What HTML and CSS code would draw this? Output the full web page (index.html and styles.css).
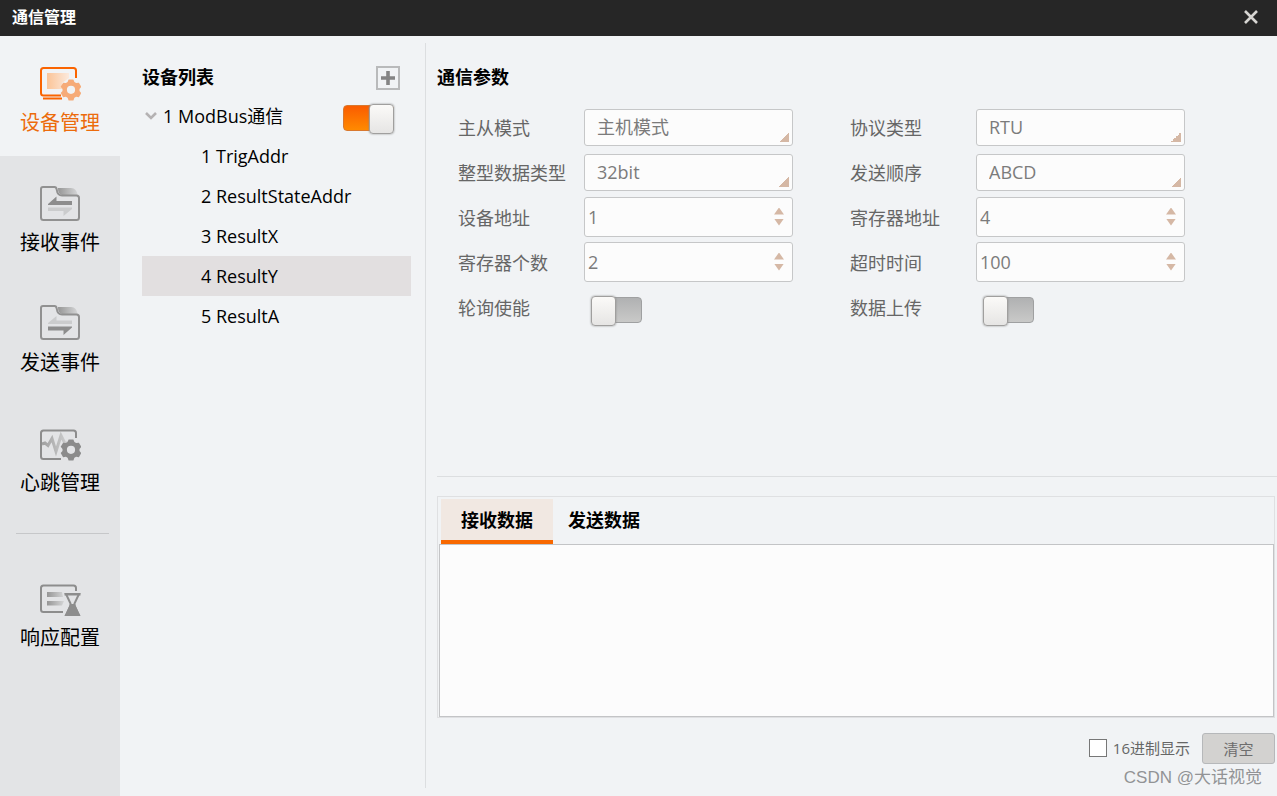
FILE: index.html
```html
<!DOCTYPE html>
<html lang="zh-CN">
<head>
<meta charset="utf-8">
<title>通信管理</title>
<link rel="stylesheet" href="styles.css">
</head>
<body>
<svg class="defs" width="0" height="0" aria-hidden="true">
  <defs>
    <linearGradient id="fadeOrange"><stop offset="0" stop-color="#fbc497"/><stop offset="1" stop-color="#fbe9dc"/></linearGradient>
    <linearGradient id="fadeGray"><stop offset="0" stop-color="#969696"/><stop offset="1" stop-color="#d4d5d6"/></linearGradient>
    <linearGradient id="pulse"><stop offset="0" stop-color="#a0a0a0"/><stop offset="1" stop-color="#d0d1d2"/></linearGradient>
    <path id="gear" d="M-2.4-10h4.8l1 2.6 1.7 1 2.8-.4 2.4 4.1-1.8 2.2v1.9l1.800 2.200-2.400 4.100-2.800-.4-1.700 1-1 2.600h-4.800l-1-2.600-1.700-1-2.800.4-2.400-4.100 1.800-2.200v-1.900l-1.800-2.200 2.400-4.100 2.800.4 1.700-1zM0-3.800a4.100 4.100 0 1 0 0 8.200 4.100 4.100 0 1 0 0-8.200z" fill-rule="evenodd"/>
    <g id="folder">
      <path d="M19 3h13c4 0 6 3 6.500 7H23c-3-1-4-3-4-7z" fill="url(#fadeGray)"/>
      <path d="M4 2h11.500c2 0 2 1 2.300 3 .5 4 2.200 5.500 5.200 5.500h14.500q2.500 0 2.500 2.500v19.500q0 2.500-2.500 2.500H4.500Q2 35 2 32.500V4q0-2 2-2z" fill="none" stroke="#919191" stroke-width="2"/>
    </g>
  </defs>
</svg>
<div class="window">
  <header class="titlebar">
    <h1 class="titlebar-text">通信管理</h1>
    <button class="close" type="button" aria-label="关闭"><svg width="16" height="16" viewBox="0 0 16 16"><path d="M2 2l12 12M14 2L2 14" stroke="#d6d5d2" stroke-width="2.600" fill="none"/></svg></button>
  </header>
  <div class="body">
    <nav class="sidebar">
      <a class="nav-item active" href="#device">
        <svg width="42" height="40" viewBox="0 0 42 40"><path d="M22 31.500H4.500Q2 31.500 2 29V6.500Q2 4 4.500 4h30Q37 4 37 6.500V14" fill="none" stroke="#fa6400" stroke-width="2"/><path d="M4 34.500h19" stroke="#fa6400" stroke-width="2"/><path d="M8 9h22v5l-7 5v6H8z" fill="url(#fadeOrange)"/><use href="#gear" x="32" y="25.500" fill="#f6ab78"/></svg>
        <span>设备管理</span>
      </a>
      <a class="nav-item" href="#receive">
        <svg width="42" height="40" viewBox="0 0 42 40"><use href="#folder" y="1"/><path d="M9 21v-1l8.500-7.500v4.500H33v4z" fill="#8d8d8d"/><path d="M33 23.500v1.500l-8.500 7v-5H9v-3.500z" fill="#cbcccd"/></svg>
        <span>接收事件</span>
      </a>
      <a class="nav-item" href="#send">
        <svg width="42" height="40" viewBox="0 0 42 40"><use href="#folder"/><path d="M9 20v-1l8.500-7v4.500H33V20z" fill="#cbcccd"/><path d="M33 22.500v1L24.500 31v-4.500H9v-4z" fill="#8d8d8d"/></svg>
        <span>发送事件</span>
      </a>
      <a class="nav-item" href="#heartbeat">
        <svg width="42" height="40" viewBox="0 0 42 40"><path d="M3 20l3-1 3 2.500 4-7 4 13 5-16 4 8 4-1" fill="none" stroke="url(#pulse)" stroke-width="3"/><path d="M22 35H4.500Q2 35 2 32.500V9q0-2.500 2.500-2.500h30Q37 6.500 37 9v5" fill="none" stroke="#8d8d8d" stroke-width="2"/><use href="#gear" x="32" y="25.500" fill="#8b8b8b"/></svg>
        <span>心跳管理</span>
      </a>
      <hr class="nav-divider">
      <a class="nav-item" href="#response">
        <svg width="42" height="40" viewBox="0 0 42 40"><path d="M24 33H4.500Q2 33 2 30.500V9q0-2.500 2.500-2.500h30Q37 6.500 37 9v3" fill="none" stroke="#8d8d8d" stroke-width="2"/><path d="M8 13h15l1 5H8zm0 9h17l-2 4.500H8z" fill="url(#fadeGray)"/><path d="M27 15h13l-4.500 9.500v2.500L40 36H27l4.500-9v-2.500z" fill="#e3e4e6" stroke="#8d8d8d" stroke-width="2"/><path d="M25.500 14h16v2.500h-16zM31 25h5l5 11.500H26z" fill="#8d8d8d"/></svg>
        <span>响应配置</span>
      </a>
    </nav>
    <section class="devices">
      <div class="devices-head">
        <h2 class="heading">设备列表</h2>
        <button class="add" type="button" aria-label="添加设备"><svg width="14" height="14" viewBox="0 0 14 14"><path d="M7 0v14M0 7h14" stroke="#848484" stroke-width="3.600"/></svg></button>
      </div>
      <div class="tree-root">
        <button class="expander" type="button" aria-label="折叠"><svg width="12" height="10" viewBox="0 0 12 10"><path d="M1 2l5 5 5-5" fill="none" stroke="#b5b2b3" stroke-width="2.600"/></svg></button>
        <label class="tree-name" for="modbus">1 ModBus通信</label>
        <input class="switch" type="checkbox" role="switch" id="modbus" checked>
      </div>
      <ul class="tree">
        <li><a class="tree-item" href="#r1">1 TrigAddr</a></li>
        <li><a class="tree-item" href="#r2">2 ResultStateAddr</a></li>
        <li><a class="tree-item" href="#r3">3 ResultX</a></li>
        <li><a class="tree-item selected" href="#r4">4 ResultY</a></li>
        <li><a class="tree-item" href="#r5">5 ResultA</a></li>
      </ul>
    </section>
    <main class="content">
      <section class="params">
        <h2 class="heading">通信参数</h2>
        <form class="form">
          <div class="field"><label for="mode">主从模式</label><select class="select" id="mode"><option>主机模式</option></select></div>
          <div class="field"><label for="protocol">协议类型</label><select class="select" id="protocol"><option>RTU</option></select></div>
          <div class="field"><label for="inttype">整型数据类型</label><select class="select" id="inttype"><option>32bit</option></select></div>
          <div class="field"><label for="order">发送顺序</label><select class="select" id="order"><option>ABCD</option></select></div>
          <div class="field"><label for="addr">设备地址</label><div class="spin"><input type="number" id="addr" value="1"><span class="steps"><button class="up" type="button" aria-label="增加"></button><button class="down" type="button" aria-label="减少"></button></span></div></div>
          <div class="field"><label for="reg">寄存器地址</label><div class="spin"><input type="number" id="reg" value="4"><span class="steps"><button class="up" type="button" aria-label="增加"></button><button class="down" type="button" aria-label="减少"></button></span></div></div>
          <div class="field"><label for="count">寄存器个数</label><div class="spin"><input type="number" id="count" value="2"><span class="steps"><button class="up" type="button" aria-label="增加"></button><button class="down" type="button" aria-label="减少"></button></span></div></div>
          <div class="field"><label for="timeout">超时时间</label><div class="spin"><input type="number" id="timeout" value="100"><span class="steps"><button class="up" type="button" aria-label="增加"></button><button class="down" type="button" aria-label="减少"></button></span></div></div>
          <div class="field"><label for="poll">轮询使能</label><input class="switch" type="checkbox" role="switch" id="poll"></div>
          <div class="field"><label for="upload">数据上传</label><input class="switch" type="checkbox" role="switch" id="upload"></div>
        </form>
      </section>
      <section class="data">
        <div class="data-panel">
          <div class="tabs" role="tablist">
            <button class="tab active" type="button" role="tab" aria-selected="true">接收数据</button>
            <button class="tab" type="button" role="tab" aria-selected="false">发送数据</button>
          </div>
          <textarea class="log" aria-label="接收数据" readonly></textarea>
        </div>
        <div class="actions">
          <label class="hex"><input type="checkbox">16进制显示</label>
          <button class="clear" type="button">清空</button>
        </div>
        <p class="watermark">CSDN @大话视觉</p>
      </section>
    </main>
  </div>
</div>
</body>
</html>
```
FILE: styles.css
```css
* { box-sizing: border-box; }

body {
  margin: 0;
  font: 18px/24px "Open Sans", "Noto Sans CJK SC", sans-serif;
  color: #000;
  background: #f1f3f5;
}

button, input, select, textarea { font: inherit; color: inherit; margin: 0; }
button { padding: 0; border: 0; background: none; }
a { color: inherit; text-decoration: none; }
svg { display: block; }
.defs { position: absolute; }

.window { display: flex; flex-direction: column; min-height: 100vh; }

.titlebar {
  display: flex;
  align-items: center;
  justify-content: space-between;
  height: 36px;
  padding: 0 18px 2px 12px;
  background: #262626;
  color: #fff;
}
.titlebar-text { margin: 0; font-size: 16px; font-weight: 700; }

.body { display: flex; flex: 1; }

.sidebar { flex: 0 0 120px; background: #e3e4e6; }
.nav-item {
  display: flex;
  flex-direction: column;
  align-items: center;
  gap: 4px;
  height: 120px;
  padding-top: 28px;
  font-size: 20px;
  line-height: 30px;
}
.nav-item.active { background: #f1f3f5; color: #ec6b0c; }
.nav-divider { height: 1px; margin: 17px 11px 17px 16px; border: 0; background: #c6c7c9; }

.devices {
  flex: 0 0 306px;
  margin: 7px 0 8px;
  padding: 22px 14px 0 22px;
  border-right: 1px solid #dcdee0;
}
.heading { margin: 0; font-size: 18px; line-height: 24px; font-weight: 700; }
.devices-head { display: flex; justify-content: space-between; padding-right: 11px; margin-bottom: 6px; }
.add {
  display: grid;
  place-items: center;
  width: 24px;
  height: 24px;
  margin-top: 1px;
  border: 2px solid #b9babb;
}
.tree-root { display: flex; align-items: center; height: 40px; padding: 0 17px 0 3px; }
.tree-root .switch { margin-top: 4px; }
.expander { margin-right: 6px; }
.tree-name { flex: 1; }
.tree { margin: 0; padding: 0; list-style: none; }
.tree-item { display: block; padding-left: 59px; line-height: 40px; }
.tree-item.selected { background: #e2dfe0; }

.switch {
  appearance: none;
  position: relative;
  width: 51px;
  height: 26px;
  border: 1px solid #9fa0a1;
  border-radius: 4px;
  background: linear-gradient(#b0b1b2, #c9c9c8);
}
.switch::before {
  content: "";
  position: absolute;
  top: -2px;
  left: -1px;
  width: 23px;
  height: 28px;
  border: 1px solid #a09f9e;
  border-radius: 4px;
  background: linear-gradient(#fbfaf8, #e6e5e4);
  box-shadow: 0 0 2px #8a8a8a;
}
.switch:checked { border-color: #d9782e; background: linear-gradient(#fa5c00, #ff8a00); }
.switch:checked::before { left: auto; right: -1px; }

.content { flex: 1; display: flex; flex-direction: column; min-width: 0; padding-left: 11px; }
.params { height: 441px; padding-top: 29px; border-bottom: 1px solid #dcdee0; }
.form {
  display: grid;
  grid-template-columns: 392px 392px;
  grid-auto-rows: 45px;
  margin: 16px 0 0 21px;
  color: #666;
}
.field { display: flex; align-items: center; }
.field label { flex: 0 0 126px; }
.field .switch { margin: 4px 0 0 7px; }
.select, .spin {
  width: 209px;
  border: 1px solid #c6c7c8;
  border-radius: 3px;
  background-color: #fcfcfc;
  color: #7b7b7b;
}
.select {
  appearance: none;
  height: 37px;
  padding: 0 12px 2px;
  background-image: linear-gradient(135deg, transparent 50%, #d5b8a5 50%);
  background-repeat: no-repeat;
  background-position: right 3px bottom 3px;
  background-size: 10px 10px;
}
.spin { display: flex; align-items: center; height: 40px; margin-bottom: 2px; padding: 0 8px 0 3px; }
.spin input {
  appearance: textfield;
  flex: 1;
  min-width: 0;
  padding: 0;
  border: 0;
  background: none;
}
.spin input::-webkit-inner-spin-button { appearance: none; }
.steps { display: grid; gap: 4px; }
.up, .down { width: 10px; height: 7px; background: #d5b8a5; }
.up { clip-path: polygon(50% 0, 100% 100%, 0 100%); }
.down { clip-path: polygon(0 0, 100% 0, 50% 100%); }

.data { flex: 1; display: flex; flex-direction: column; padding: 19px 2px 6px 0; }
.data-panel {
  flex: 1;
  display: flex;
  flex-direction: column;
  padding: 2px 0 0 1px;
  border: 1px solid #dfe0e2;
}
.tabs { display: flex; padding-left: 2px; }
.tab { height: 45px; padding: 0 15px; font-weight: 700; border-bottom: 4px solid transparent; }
.tab.active { padding: 0 20px; background: #f1e8e2; border-bottom-color: #f86800; }
.log {
  flex: 1;
  display: block;
  width: 100%;
  border: 1px solid #c3c4c6;
  background: #fcfcfc;
  resize: none;
  outline: 0;
}
.actions { display: flex; justify-content: flex-end; align-items: center; gap: 12px; margin-top: 15px; font-size: 15px; color: #666; }
.hex { display: flex; align-items: center; gap: 6px; padding-bottom: 2px; }
.hex input { appearance: none; width: 18px; height: 18px; border: 1px solid #777; background: #fff; }
.clear { width: 73px; height: 31px; border: 1px solid #b6b8ba; border-radius: 3px; background: #d3d2d0; color: #6d6d6d; }
.watermark { margin: 2px 13px 0 0; font: 17px/24px "Liberation Sans", "Noto Sans CJK SC", sans-serif; text-align: right; color: #929395; }
```
